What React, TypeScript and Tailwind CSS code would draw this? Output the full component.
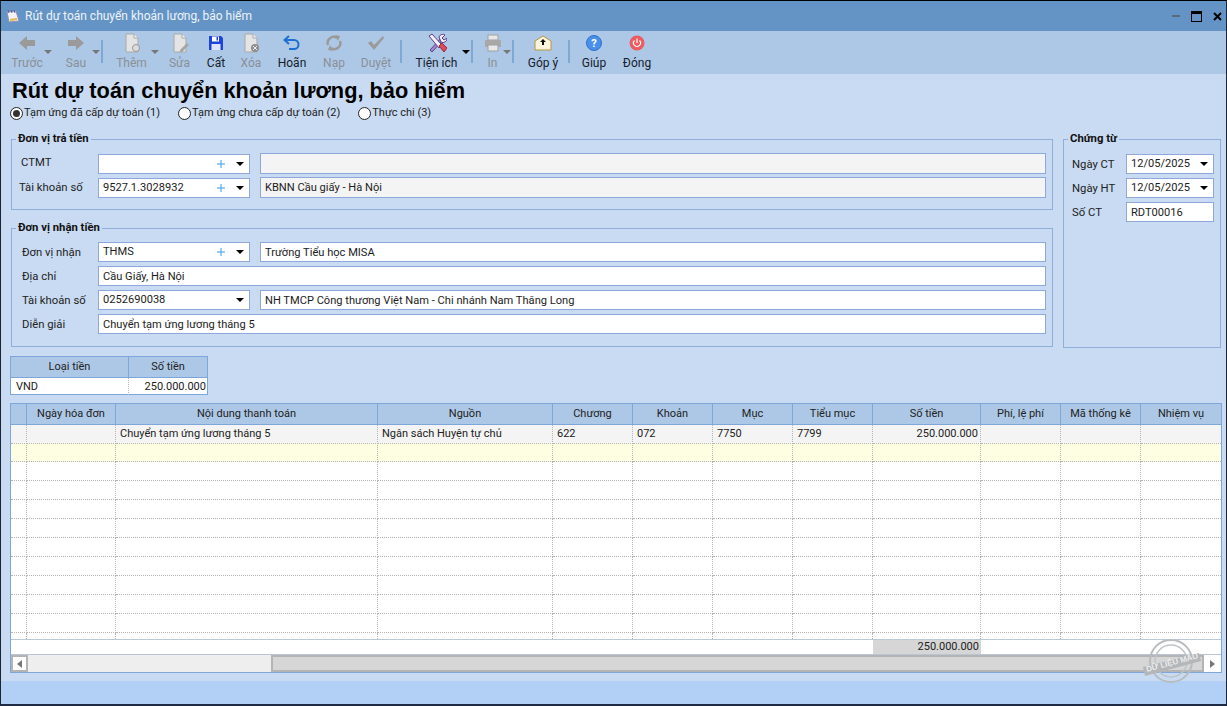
import type { ReactNode } from "react";

const rowGrid =
  "grid grid-cols-[16px_89px_262px_175px_80px_80px_80px_80px_108px_80px_80px_80px]";

const headers = [
  "",
  "Ngày hóa đơn",
  "Nội dung thanh toán",
  "Nguồn",
  "Chương",
  "Khoản",
  "Mục",
  "Tiểu mục",
  "Số tiền",
  "Phí, lệ phí",
  "Mã thống kê",
  "Nhiệm vụ",
];

const firstRow = [
  "",
  "",
  "Chuyển tạm ứng lương tháng 5",
  "Ngân sách Huyện tự chủ",
  "622",
  "072",
  "7750",
  "7799",
  "250.000.000",
  "",
  "",
  "",
];

const blank = headers.map(() => "");

function Caret({ dark }: { dark?: boolean }) {
  return (
    <span
      className={`h-0 w-0 border-x-[4px] border-t-[4px] border-x-transparent ${
        dark ? "border-t-black" : "border-t-[#777777]"
      }`}
    />
  );
}

function ToolBtn({
  w,
  label,
  icon,
  off,
  caret,
}: {
  w: string;
  label: string;
  icon: ReactNode;
  off?: boolean;
  caret?: "dark" | "gray";
}) {
  return (
    <div className={`relative flex h-full shrink-0 flex-col items-center pt-[2px] ${w}`}>
      <div className="flex h-[20px] w-[20px] items-center justify-center">{icon}</div>
      <span className={`mt-[2px] text-[12px] leading-[16px] ${off ? "text-[#8a8f96]" : "text-[#15202b]"}`}>
        {label}
      </span>
      {caret && (
        <span className="absolute right-0 top-[19px] flex">
          <Caret dark={caret === "dark"} />
        </span>
      )}
    </div>
  );
}

function Sep() {
  return <div className="mx-[1px] mt-[9px] h-[23px] w-[2px] shrink-0 bg-[#7fa8d6]" />;
}

function PageIcon({ badge }: { badge?: ReactNode }) {
  return (
    <svg width="20" height="20" viewBox="0 0 20 20">
      <path d="M4 1h8l4 4v14H4z" fill="#e4e4e4" stroke="#a8a8a8" />
      <path d="M12 1v4h4" fill="#f5f5f5" stroke="#a8a8a8" />
      {badge}
    </svg>
  );
}

function Radio({ label, on }: { label: string; on?: boolean }) {
  return (
    <label className="flex items-center gap-[1px]">
      <span className="flex h-[13px] w-[13px] items-center justify-center rounded-full border border-[#222222] bg-white">
        {on && <span className="h-[7px] w-[7px] rounded-full bg-[#333333]" />}
      </span>
      <span className="text-[11px] leading-[16px] text-[#222222]">{label}</span>
    </label>
  );
}

function Box({ children, className }: { children?: ReactNode; className: string }) {
  return (
    <div className={`flex items-center border border-[#8ea8dc] pl-[4px] text-[11.1px] text-[#1c1c1c] ${className}`}>
      {children}
    </div>
  );
}

function TextBox({ children, className }: { children?: ReactNode; className: string }) {
  return (
    <Box className={className}>
      <span className="pt-[2px]">{children}</span>
    </Box>
  );
}

function Combo({ value, plus }: { value: string; plus?: boolean }) {
  return (
    <Box className="h-[20px] w-[152px] shrink-0 bg-white">
      <span className="flex-1 pt-[1px]">{value}</span>
      {plus && (
        <svg width="10" height="10" viewBox="0 0 10 10" className="mr-[10px]">
          <path d="M5 1v8M1 5h8" stroke="#3d9be9" strokeWidth="1" />
        </svg>
      )}
      <span className="mr-[5px] flex">
        <Caret dark />
      </span>
    </Box>
  );
}

function Label({ children, className }: { children: string; className: string }) {
  return <span className={`shrink-0 text-[11.3px] text-[#222222] ${className}`}>{children}</span>;
}

function GroupTitle({ children }: { children: string }) {
  return (
    <legend className="ml-[-5px] px-[2px] text-[11.3px] leading-[14px] font-bold text-[#111111]">{children}</legend>
  );
}

function DateBox({ value }: { value: string }) {
  return (
    <Box className="h-[20px] w-[88px] bg-white">
      <span className="flex-1">{value}</span>
      <span className="mr-[5px] flex">
        <Caret dark />
      </span>
    </Box>
  );
}

function Stamp() {
  return (
    <svg width="64" height="48" viewBox="0 0 64 48" className="absolute right-[16px] top-[-17px]">
      <circle cx="30" cy="23" r="21" fill="none" stroke="#b8bcbe" strokeWidth="2" />
      <circle cx="30" cy="23" r="16" fill="none" stroke="#bfc3c5" strokeWidth="1.5" />
      <path d="M2 29 L58 15 L60 23 L4 38 Z" fill="#b3b7b9" />
      <text
        x="6"
        y="34"
        transform="rotate(-15 6 34)"
        className="fill-[#ececec] text-[8px] font-bold"
        fontFamily="Liberation Sans"
      >
        DỮ LIỆU MẪU
      </text>
    </svg>
  );
}

export default function App() {
  return (
    <div className="flex h-[706px] w-[1227px] flex-col overflow-hidden border-x-[1px] border-t-[1px] border-b-[2px] border-x-[#1a2433] border-t-black border-b-[#1f2a44] bg-[#c9dbf2] font-['Roboto','Open_Sans',sans-serif]">
      {/* title bar */}
      <div className="flex h-[30px] shrink-0 items-center bg-[#6394c5] pl-[5px] pr-[4px]">
        <svg width="14" height="14" viewBox="0 0 14 14">
          <path d="M1 3l9-1 3 10-10 1z" fill="#f1f1f6" stroke="#8d8fb8" />
          <path d="M2 1l1 3M5 1l1 3M8 1l1 3" stroke="#5a5fa0" />
          <path d="M4 11l7-1" stroke="#e0b84a" strokeWidth="2" />
        </svg>
        <span className="ml-[5px] flex-1 text-[12px] text-[#eef3f9]">Rút dự toán chuyển khoản lương, bảo hiểm</span>
        <div className="flex items-center">
          <span className="mr-[11px] h-[2px] w-[8px] bg-[#5a6a7c]" />
          <span className="mr-[11px] h-[11px] w-[11px] border border-t-[3px] border-black" />
          <svg width="9" height="9" viewBox="0 0 9 9">
            <path d="M1 1l7 7M8 1l-7 7" stroke="black" strokeWidth="2" />
          </svg>
        </div>
      </div>

      {/* toolbar */}
      <div className="flex h-[43px] shrink-0 items-start bg-[#adc8e6] pl-[1px]">
        <ToolBtn
          w="w-[50px]"
          label="Trước"
          off
          caret="gray"
          icon={
            <svg width="18" height="16" viewBox="0 0 18 16">
              <path d="M1 8l8-7v4h8v6H9v4z" fill="#9a9a9a" />
            </svg>
          }
        />
        <ToolBtn
          w="w-[48px]"
          label="Sau"
          off
          caret="gray"
          icon={
            <svg width="18" height="16" viewBox="0 0 18 16">
              <path d="M17 8L9 1v4H1v6h8v4z" fill="#9a9a9a" />
            </svg>
          }
        />
        <Sep />
        <ToolBtn
          w="w-[55px]"
          label="Thêm"
          off
          caret="gray"
          icon={<PageIcon badge={<circle cx="14" cy="15" r="3.5" fill="#dcdcdc" stroke="#9a9a9a" />} />}
        />
        <ToolBtn
          w="w-[41px]"
          label="Sửa"
          off
          icon={<PageIcon badge={<path d="M10 17l7-7 2 2-7 7h-2z" fill="#a5a5a5" />} />}
        />
        <ToolBtn
          w="w-[32px]"
          label="Cất"
          icon={
            <svg width="16" height="16" viewBox="0 0 16 16">
              <path d="M1 1h12l2 2v12H1z" fill="#1f45d8" />
              <rect x="4" y="1.5" width="7" height="5" fill="#ffffff" />
              <rect x="8.5" y="2" width="1.5" height="3.5" fill="#1f45d8" />
              <rect x="3.5" y="9" width="9" height="6" fill="#dfe6fb" />
            </svg>
          }
        />
        <ToolBtn
          w="w-[38px]"
          label="Xóa"
          off
          icon={
            <PageIcon
              badge={
                <>
                  <circle cx="14" cy="15" r="4" fill="#8d8d8d" />
                  <path d="M12 13l4 4M16 13l-4 4" stroke="#eeeeee" />
                </>
              }
            />
          }
        />
        <ToolBtn
          w="w-[44px]"
          label="Hoãn"
          icon={
            <svg width="18" height="16" viewBox="0 0 18 16">
              <path d="M6 1L1.5 5 6 9M2 5h9a4.5 4.5 0 0 1 0 9H6" fill="none" stroke="#1f6fd0" strokeWidth="2" />
            </svg>
          }
        />
        <ToolBtn
          w="w-[40px]"
          label="Nạp"
          off
          icon={
            <svg width="18" height="18" viewBox="0 0 18 18">
              <path d="M3 11a6 6 0 0 1 9-7M15 7a6 6 0 0 1-9 7" fill="none" stroke="#9a9a9a" strokeWidth="2.5" />
              <path d="M10 1l5 1-2 5zM8 17l-5-1 2-5z" fill="#9a9a9a" />
            </svg>
          }
        />
        <ToolBtn
          w="w-[44px]"
          label="Duyệt"
          off
          icon={
            <svg width="18" height="16" viewBox="0 0 18 16">
              <path d="M1 8l3-2 3 4 9-9 1 2-10 12z" fill="#9a9a9a" />
            </svg>
          }
        />
        <div className="w-[1px] shrink-0" />
        <Sep />
        <ToolBtn
          w="w-[67px]"
          label="Tiện ích"
          caret="dark"
          icon={
            <svg width="20" height="20" viewBox="0 0 20 20">
              <path d="M3 17L14 5l2 2L5 19z" fill="#a489c8" stroke="#5d3f8e" />
              <path d="M12 4a4 4 0 0 1 6-2l-3 3 2 2 3-2a4 4 0 0 1-6 4z" fill="#f2eef8" stroke="#5d3f8e" />
              <path d="M2 3l3-2 10 11-3 3z" fill="#f2eef8" stroke="#5d3f8e" />
              <path d="M12 13l3-3 5 5-3 4z" fill="#d94a5e" stroke="#a02a3c" />
            </svg>
          }
        />
        <Sep />
        <ToolBtn
          w="w-[37px]"
          label="In"
          off
          caret="gray"
          icon={
            <svg width="18" height="18" viewBox="0 0 18 18">
              <rect x="4" y="1" width="10" height="5" fill="#e8e8e8" stroke="#a0a0a0" />
              <rect x="1" y="6" width="16" height="7" rx="1" fill="#a8a8a8" />
              <rect x="4" y="11" width="10" height="6" fill="#e8e8e8" stroke="#a0a0a0" />
            </svg>
          }
        />
        <Sep />
        <ToolBtn
          w="w-[52px] pl-[4px]"
          label="Góp ý"
          icon={
            <svg width="18" height="16" viewBox="0 0 18 16">
              <path d="M1 6l8-5 8 5v9H1z" fill="#fdf6dc" stroke="#b8953e" />
              <path d="M9 4l-3 3h2v3h2V7h2z" fill="#111111" />
            </svg>
          }
        />
        <Sep />
        <ToolBtn
          w="w-[46px]"
          label="Giúp"
          icon={
            <div className="flex h-[16px] w-[16px] items-center justify-center rounded-full border border-[#2a6fd0] bg-[#4a90ea] text-[11px] leading-none font-bold text-white">
              ?
            </div>
          }
        />
        <ToolBtn
          w="w-[40px]"
          label="Đóng"
          icon={
            <svg width="16" height="16" viewBox="0 0 16 16">
              <circle cx="8" cy="8" r="7.5" fill="#ee5a5e" />
              <path d="M5.5 5.5a3.5 3.5 0 1 0 5 0M8 3.5v4.5" fill="none" stroke="#ffffff" strokeWidth="1.2" />
            </svg>
          }
        />
      </div>

      {/* body */}
      <div className="flex flex-1 flex-col bg-[#c9dbf2]">
        <h1 className="ml-[11px] mt-[4px] font-['Liberation_Sans',sans-serif] text-[21.75px] leading-[25px] font-bold text-black">
          Rút dự toán chuyển khoản lương, bảo hiểm
        </h1>
        <div className="ml-[9px] mt-[2px] flex gap-[18px]">
          <Radio on label="Tạm ứng đã cấp dự toán (1)" />
          <Radio label="Tạm ứng chưa cấp dự toán (2)" />
          <Radio label="Thực chi (3)" />
        </div>

        <div className="ml-[10px] mt-[11px] flex h-[222px] gap-[10px]">
          <div className="flex w-[1042px] flex-col">
            <fieldset className="h-[78px] border border-[#8fafd8] pl-[9px] pr-[6px] pt-[7px]">
              <GroupTitle>Đơn vị trả tiền</GroupTitle>
              <div className="flex items-center">
                <Label className="w-[77px]">CTMT</Label>
                <Combo value="" plus />
                <TextBox className="ml-[10px] h-[21px] w-[786px] bg-[#f4f4f4]" />
              </div>
              <div className="mt-[3px] flex items-center">
                <Label className="ml-[-2px] w-[79px] pt-[1px]">Tài khoản số</Label>
                <Combo value="9527.1.3028932" plus />
                <TextBox className="ml-[10px] h-[21px] w-[786px] bg-[#f4f4f4]">KBNN Cầu giấy - Hà Nội</TextBox>
              </div>
            </fieldset>
            <fieldset className="mt-[11px] h-[126px] border border-[#8fafd8] pl-[9px] pr-[6px] pt-[7px]">
              <GroupTitle>Đơn vị nhận tiền</GroupTitle>
              <div className="flex items-center">
                <Label className="w-[77px] pl-[1px] pt-[2px]">Đơn vị nhận</Label>
                <Combo value="THMS" plus />
                <TextBox className="ml-[10px] h-[20px] w-[786px] bg-white">Trường Tiểu học MISA</TextBox>
              </div>
              <div className="mt-[4px] flex items-center">
                <Label className="w-[77px] pl-[1px] pt-[2px]">Địa chỉ</Label>
                <TextBox className="h-[20px] w-[948px] bg-white">Cầu Giấy, Hà Nội</TextBox>
              </div>
              <div className="mt-[4px] flex items-center">
                <Label className="w-[77px] pl-[1px] pt-[2px]">Tài khoản số</Label>
                <Combo value="0252690038" />
                <TextBox className="ml-[10px] h-[20px] w-[786px] bg-white">
                  NH TMCP Công thương Việt Nam - Chi nhánh Nam Thăng Long
                </TextBox>
              </div>
              <div className="mt-[4px] flex items-center">
                <Label className="w-[77px] pl-[1px] pt-[2px]">Diễn giải</Label>
                <TextBox className="h-[20px] w-[948px] bg-white">Chuyển tạm ứng lương tháng 5</TextBox>
              </div>
            </fieldset>
          </div>
          <fieldset className="h-[216px] w-[158px] border border-[#8fafd8] pl-[9px] pr-[6px] pt-[8px]">
            <GroupTitle>Chứng từ</GroupTitle>
            <div className="flex items-center">
              <Label className="ml-[-1px] w-[54px] pt-[2px]">Ngày CT</Label>
              <DateBox value="12/05/2025" />
            </div>
            <div className="mt-[4px] flex items-center">
              <Label className="ml-[-1px] w-[54px] pt-[2px]">Ngày HT</Label>
              <DateBox value="12/05/2025" />
            </div>
            <div className="mt-[4px] flex items-center">
              <Label className="ml-[-1px] w-[54px] pt-[2px]">Số CT</Label>
              <TextBox className="h-[20px] w-[88px] bg-white">RDT00016</TextBox>
            </div>
          </fieldset>
        </div>

        {/* currency table */}
        <div className="ml-[9px] mt-[2px] w-[198px] border border-[#7ea6d8] text-[11px] text-[#222222]">
          <div className="grid h-[20px] grid-cols-[118px_78px] bg-[#adc8e6] text-center leading-[20px]">
            <div className="border-r border-[#7ea6d8]">Loại tiền</div>
            <div>Số tiền</div>
          </div>
          <div className="grid h-[17px] grid-cols-[118px_78px] border-t border-[#7ea6d8] bg-white leading-[17px]">
            <div className="border-r border-dotted border-[#b4b4b4] pl-[5px]">VND</div>
            <div className="pr-[1px] text-right">250.000.000</div>
          </div>
        </div>

        {/* detail grid */}
        <div className="relative ml-[9px] mt-[8px] w-[1212px] border border-[#7ea6d8] text-[11px] text-[#222222]">
          <div className={`${rowGrid} h-[20px] bg-[#adc8e6] text-center leading-[19px]`}>
            {headers.map((h, i) => (
              <div key={i} className="border-r border-[#7ea6d8] last:border-r-0">
                {h}
              </div>
            ))}
          </div>
          <div className={`${rowGrid} h-[19px] border-t border-[#7ea6d8] bg-[#f4f4f4] leading-[18px]`}>
            {firstRow.map((c, i) => (
              <div
                key={i}
                className={`border-r border-b border-dotted border-[#b4b4b4] last:border-r-0 ${
                  i === 8 ? "pr-[2px] text-right" : "pl-[4px]"
                }`}
              >
                {c}
              </div>
            ))}
          </div>
          {Array.from({ length: 10 }).map((_, r) => (
            <div key={r} className={`${rowGrid} h-[19px] ${r === 0 ? "bg-[#feffe2]" : "bg-white"}`}>
              {blank.map((_, i) => (
                <div key={i} className="border-r border-b border-dotted border-[#b4b4b4] last:border-r-0" />
              ))}
            </div>
          ))}
          <div className={`${rowGrid} h-[6px] bg-white`}>
            {blank.map((_, i) => (
              <div key={i} className="border-r border-dotted border-[#b4b4b4] last:border-r-0" />
            ))}
          </div>
          <div className={`${rowGrid} h-[16px] border-y border-[#b8c6d6] bg-white leading-[14px]`}>
            {blank.map((_, i) => (
              <div key={i} className={i === 8 ? "bg-[#d6d6d6] pr-[2px] text-right" : ""}>
                {i === 8 ? "250.000.000" : ""}
              </div>
            ))}
          </div>
          <div className="relative flex h-[17px] bg-[#eeeeee]">
            <div className="flex w-[17px] items-center justify-center border-2 border-[#b4b4b4] bg-white">
              <span className="h-0 w-0 border-y-[4px] border-r-[5px] border-y-transparent border-r-[#777777]" />
            </div>
            <div className="w-[243px]" />
            <div className="flex-1 border-2 border-[#b4b4b4] bg-[#d6d6d6]" />
            <div className="flex w-[17px] items-center justify-center bg-white">
              <span className="h-0 w-0 border-y-[4px] border-l-[5px] border-y-transparent border-l-[#777777]" />
            </div>
            <Stamp />
          </div>
        </div>

        {/* status bar */}
        <div className="mt-auto h-[23px] bg-[#b2d0f5]" />
      </div>
    </div>
  );
}
